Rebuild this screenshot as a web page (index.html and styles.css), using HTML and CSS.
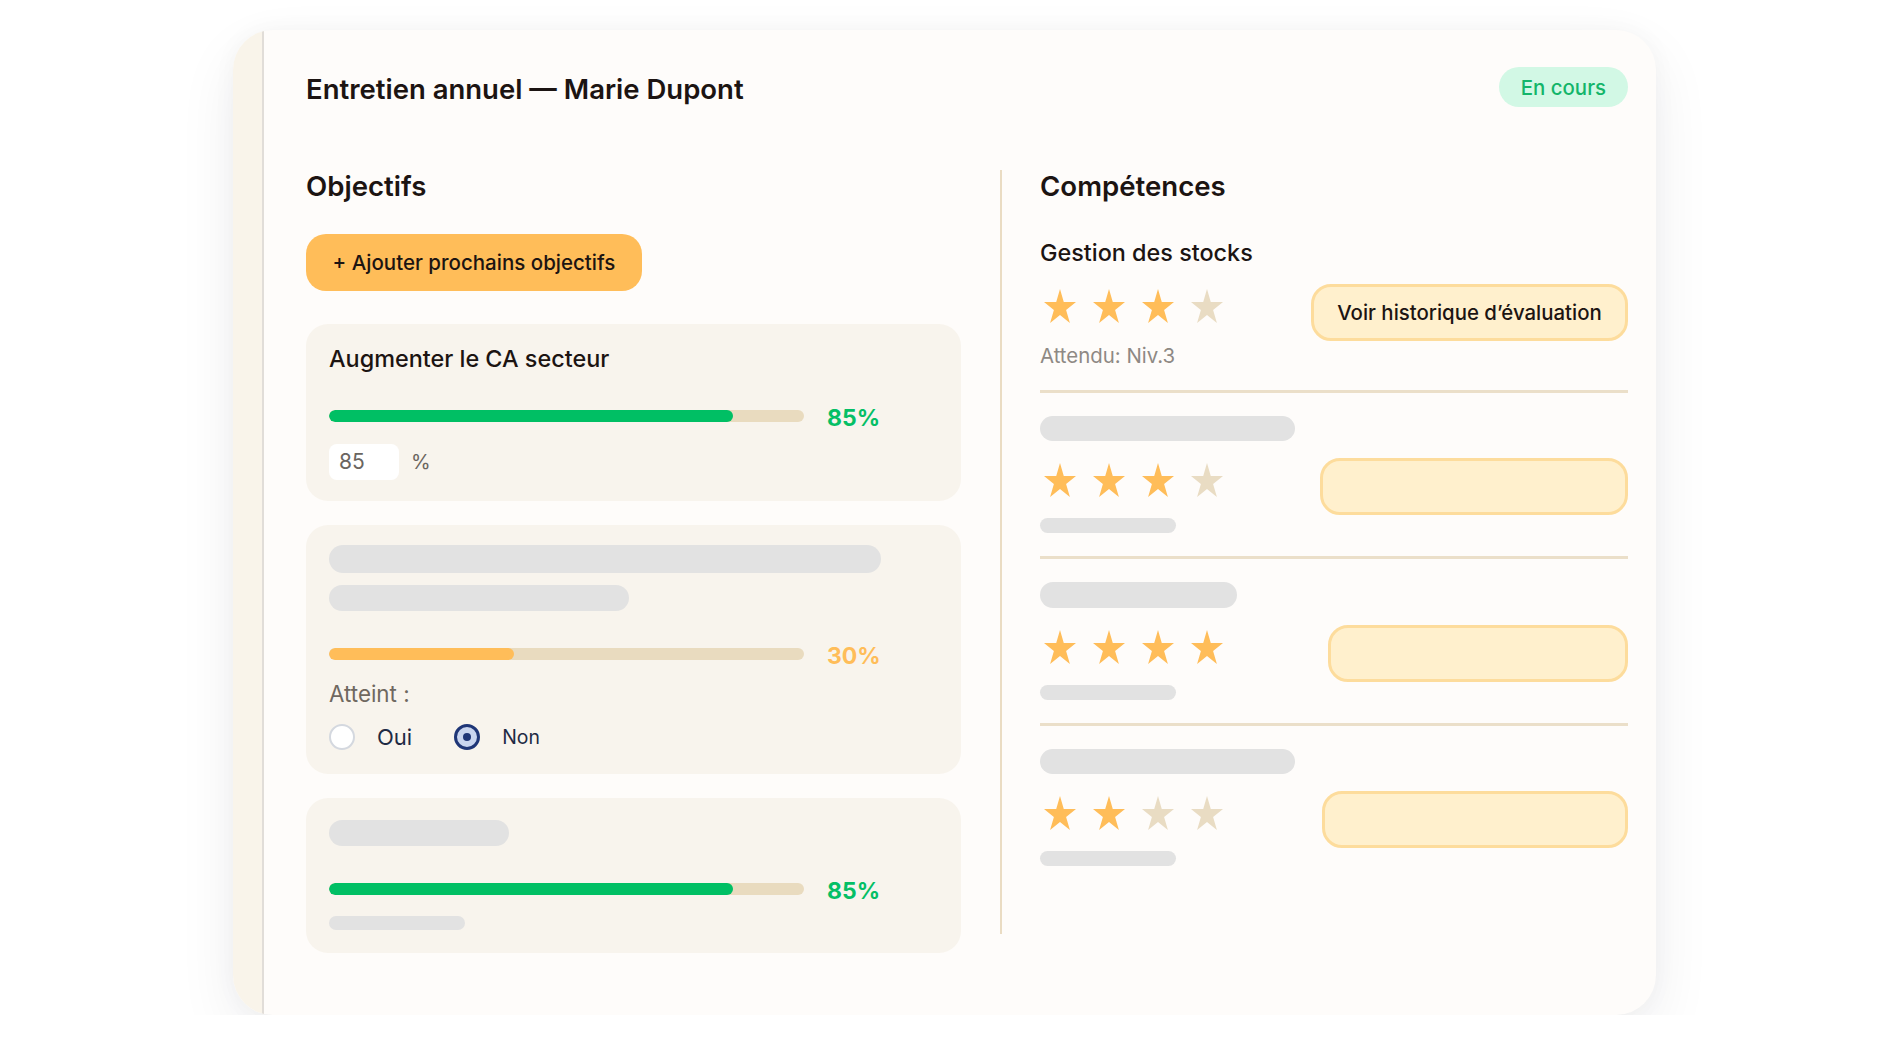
FILE: index.html
```html
<!DOCTYPE html>
<html lang="fr">
<head>
<meta charset="utf-8">
<title>Entretien annuel — Marie Dupont</title>
<link rel="stylesheet" href="styles.css">
</head>
<body>
<div class="card">
  <div class="strip"></div>
  <main class="main">
    <header class="header">
      <h1 class="title">Entretien annuel — Marie Dupont</h1>
      <span class="badge">En cours</span>
    </header>

    <div class="columns">
      <section class="col-left">
        <h2 class="section-title">Objectifs</h2>
        <button class="btn-add">+ Ajouter prochains objectifs</button>

        <div class="obj-list">
          <article class="obj-card obj-card--first">
            <h3 class="obj-title">Augmenter le CA secteur</h3>
            <div class="progress-row">
              <div class="track"><div class="fill fill-green" style="width:85%"></div></div>
              <span class="pct pct-green">85%</span>
            </div>
            <div class="input-row">
              <span class="num-input">85</span>
              <span class="unit">%</span>
            </div>
          </article>

          <article class="obj-card obj-card--second">
            <div class="skel skel-l1"></div>
            <div class="skel skel-l2"></div>
            <div class="progress-row">
              <div class="track"><div class="fill fill-orange" style="width:39%"></div></div>
              <span class="pct pct-orange">30%</span>
            </div>
            <div class="atteint">Atteint :</div>
            <div class="radio-row">
              <span class="radio"></span>
              <span class="radio-label">Oui</span>
              <span class="radio radio--on"><span class="radio-dot"></span></span>
              <span class="radio-label radio-label--small">Non</span>
            </div>
          </article>

          <article class="obj-card obj-card--third">
            <div class="skel skel-l3"></div>
            <div class="progress-row">
              <div class="track"><div class="fill fill-green" style="width:85%"></div></div>
              <span class="pct pct-green">85%</span>
            </div>
            <div class="skel skel-sm"></div>
          </article>
        </div>
      </section>

      <div class="vdivider"></div>

      <section class="col-right">
        <h2 class="section-title section-title--right">Compétences</h2>

        <div class="comp comp--first">
          <div class="comp-title">Gestion des stocks</div>
          <div class="comp-row">
            <div class="stars">
              <svg class="star on" viewBox="0 0 32 34"><polygon points="16,0 19.77,12.99 32,12.99 22.1,21.02 25.89,34 16,25.98 6.11,34 9.89,21.02 0,12.99 12.22,12.99"/></svg>
              <svg class="star on" viewBox="0 0 32 34"><polygon points="16,0 19.77,12.99 32,12.99 22.1,21.02 25.89,34 16,25.98 6.11,34 9.89,21.02 0,12.99 12.22,12.99"/></svg>
              <svg class="star on" viewBox="0 0 32 34"><polygon points="16,0 19.77,12.99 32,12.99 22.1,21.02 25.89,34 16,25.98 6.11,34 9.89,21.02 0,12.99 12.22,12.99"/></svg>
              <svg class="star off" viewBox="0 0 32 34"><polygon points="16,0 19.77,12.99 32,12.99 22.1,21.02 25.89,34 16,25.98 6.11,34 9.89,21.02 0,12.99 12.22,12.99"/></svg>
            </div>
            <button class="btn-outline btn-w1">Voir historique d’évaluation</button>
          </div>
          <div class="comp-sub">Attendu: Niv.3</div>
        </div>

        <div class="comp">
          <div class="skel skel-ct1"></div>
          <div class="comp-row">
            <div class="stars">
              <svg class="star on" viewBox="0 0 32 34"><polygon points="16,0 19.77,12.99 32,12.99 22.1,21.02 25.89,34 16,25.98 6.11,34 9.89,21.02 0,12.99 12.22,12.99"/></svg>
              <svg class="star on" viewBox="0 0 32 34"><polygon points="16,0 19.77,12.99 32,12.99 22.1,21.02 25.89,34 16,25.98 6.11,34 9.89,21.02 0,12.99 12.22,12.99"/></svg>
              <svg class="star on" viewBox="0 0 32 34"><polygon points="16,0 19.77,12.99 32,12.99 22.1,21.02 25.89,34 16,25.98 6.11,34 9.89,21.02 0,12.99 12.22,12.99"/></svg>
              <svg class="star off" viewBox="0 0 32 34"><polygon points="16,0 19.77,12.99 32,12.99 22.1,21.02 25.89,34 16,25.98 6.11,34 9.89,21.02 0,12.99 12.22,12.99"/></svg>
            </div>
            <div class="btn-outline btn-w2"></div>
          </div>
          <div class="skel skel-csub"></div>
        </div>

        <div class="comp">
          <div class="skel skel-ct2"></div>
          <div class="comp-row">
            <div class="stars">
              <svg class="star on" viewBox="0 0 32 34"><polygon points="16,0 19.77,12.99 32,12.99 22.1,21.02 25.89,34 16,25.98 6.11,34 9.89,21.02 0,12.99 12.22,12.99"/></svg>
              <svg class="star on" viewBox="0 0 32 34"><polygon points="16,0 19.77,12.99 32,12.99 22.1,21.02 25.89,34 16,25.98 6.11,34 9.89,21.02 0,12.99 12.22,12.99"/></svg>
              <svg class="star on" viewBox="0 0 32 34"><polygon points="16,0 19.77,12.99 32,12.99 22.1,21.02 25.89,34 16,25.98 6.11,34 9.89,21.02 0,12.99 12.22,12.99"/></svg>
              <svg class="star on" viewBox="0 0 32 34"><polygon points="16,0 19.77,12.99 32,12.99 22.1,21.02 25.89,34 16,25.98 6.11,34 9.89,21.02 0,12.99 12.22,12.99"/></svg>
            </div>
            <div class="btn-outline btn-w3"></div>
          </div>
          <div class="skel skel-csub"></div>
        </div>

        <div class="comp comp--last">
          <div class="skel skel-ct1"></div>
          <div class="comp-row">
            <div class="stars">
              <svg class="star on" viewBox="0 0 32 34"><polygon points="16,0 19.77,12.99 32,12.99 22.1,21.02 25.89,34 16,25.98 6.11,34 9.89,21.02 0,12.99 12.22,12.99"/></svg>
              <svg class="star on" viewBox="0 0 32 34"><polygon points="16,0 19.77,12.99 32,12.99 22.1,21.02 25.89,34 16,25.98 6.11,34 9.89,21.02 0,12.99 12.22,12.99"/></svg>
              <svg class="star off" viewBox="0 0 32 34"><polygon points="16,0 19.77,12.99 32,12.99 22.1,21.02 25.89,34 16,25.98 6.11,34 9.89,21.02 0,12.99 12.22,12.99"/></svg>
              <svg class="star off" viewBox="0 0 32 34"><polygon points="16,0 19.77,12.99 32,12.99 22.1,21.02 25.89,34 16,25.98 6.11,34 9.89,21.02 0,12.99 12.22,12.99"/></svg>
            </div>
            <div class="btn-outline btn-w4"></div>
          </div>
          <div class="skel skel-csub"></div>
        </div>
      </section>
    </div>
  </main>
</div>
</body>
</html>
```
FILE: styles.css
```css
* { box-sizing: border-box; }

html, body {
  margin: 0;
  padding: 0;
  background: #ffffff;
}

body {
  font-family: Inter, "Noto Sans", "Liberation Sans", sans-serif;
  color: #1c1412;
  padding: 30px 0 0 233px;
}

.card {
  width: 1423px;
  height: 985px;
  display: flex;
  border-radius: 40px;
  overflow: hidden;
  background: #fefcfa;
  box-shadow: 0 22px 60px rgba(30, 30, 40, 0.07), 0 0 24px rgba(30, 30, 40, 0.035);
}

.strip {
  width: 31px;
  flex: none;
  background: #f9f4ea;
  border-right: 2px solid #e1ddd8;
}

.main {
  flex: 1;
  padding: 39px 28px 0 42px;
}

.header {
  display: flex;
  align-items: center;
  justify-content: space-between;
  height: 40px;
}

.title {
  margin: 0;
  font-size: 27.5px;
  font-weight: 600;
  line-height: 34px;
}

.badge {
  height: 40px;
  padding: 0 22px;
  margin-top: -4px;
  display: flex;
  align-items: center;
  border-radius: 20px;
  background: #d2f8e5;
  color: #13b56a;
  font-size: 20.4px;
  font-weight: 500;
}

.columns {
  display: flex;
  margin-top: 61px;
}

.col-left {
  width: 655px;
  flex: none;
}

.vdivider {
  width: 2px;
  height: 764px;
  flex: none;
  margin: 0 38px 0 39px;
  background: #eadcc3;
}

.col-right {
  flex: 1;
}

.section-title {
  margin: 0;
  font-size: 27.6px;
  font-weight: 600;
  line-height: 32px;
}

.section-title--right {
  margin-bottom: 37px;
}

.btn-add {
  display: block;
  margin-top: 32px;
  height: 57px;
  width: 336px;
  padding: 0;
  border: none;
  border-radius: 20px;
  background: #ffbd59;
  color: #1c1412;
  font-family: inherit;
  font-size: 20.5px;
  font-weight: 500;
  text-align: center;
}

.obj-list {
  margin-top: 33px;
  display: flex;
  flex-direction: column;
  gap: 24px;
}

.obj-card {
  background: #f8f4ed;
  border-radius: 22px;
  padding: 21px 23px;
}

.obj-card--second { padding: 20px 23px 24px; }
.obj-card--third { padding: 22px 23px 23px; }

.obj-title {
  margin: 0;
  font-size: 23.4px;
  font-weight: 500;
  line-height: 28px;
}

.progress-row {
  display: flex;
  align-items: center;
  gap: 23px;
  height: 30px;
  margin-top: 28px;
}

.track {
  width: 475px;
  height: 12px;
  border-radius: 6px;
  background: #e9dbbf;
  overflow: hidden;
}

.fill {
  height: 100%;
  border-radius: 6px;
}

.fill-green { background: #00bf64; }
.fill-orange { background: #ffbd59; }

.pct {
  font-size: 23px;
  font-weight: 700;
  line-height: 30px;
  padding-top: 3px;
}

.pct-green { color: #05bf66; }
.pct-orange { color: #ffbd59; }

.input-row {
  display: flex;
  align-items: center;
  margin-top: 13px;
  gap: 12px;
}

.num-input {
  width: 70px;
  height: 36px;
  border-radius: 8px;
  background: #ffffff;
  color: #6a6560;
  font-size: 21px;
  line-height: 36px;
  padding-left: 10px;
}

.unit {
  font-size: 20px;
  color: #6a6560;
}

.skel {
  background: #e2e2e2;
  border-radius: 999px;
}

.skel-l1 { width: 552px; height: 28px; }
.skel-l2 { width: 300px; height: 26px; margin-top: 12px; }
.skel-l3 { width: 180px; height: 26px; }
.skel-sm { width: 136px; height: 14px; margin-top: 12px; }

.atteint {
  margin-top: 12px;
  font-size: 22.4px;
  line-height: 26px;
  color: #6f6860;
}

.radio-row {
  display: flex;
  align-items: center;
  height: 26px;
  margin-top: 17px;
}

.radio {
  width: 26px;
  height: 26px;
  border-radius: 50%;
  background: #ffffff;
  border: 2px solid #d4d8df;
  display: flex;
  align-items: center;
  justify-content: center;
  flex: none;
}

.radio--on {
  background: #c9d5ef;
  border: 3px solid #1f3677;
  margin-left: 42px;
}

.radio-dot {
  width: 8px;
  height: 8px;
  border-radius: 50%;
  background: #1f3677;
}

.radio-label {
  margin-left: 22px;
  font-size: 22px;
  color: #1e2a44;
}

.radio-label--small {
  font-size: 19.4px;
}

.comp {
  padding: 23px 0 23px;
  border-bottom: 3px solid #ebdfc9;
}

.comp--first { padding: 0 0 22px; }
.comp--last { border-bottom: none; }

.comp-title {
  font-size: 23.4px;
  font-weight: 500;
  line-height: 28px;
}

.skel-ct1 { width: 255px; height: 25px; }
.skel-ct2 { width: 197px; height: 26px; }
.skel-csub { width: 136px; height: 15px; margin-top: 3px; }

.comp-row {
  display: flex;
  align-items: flex-start;
  justify-content: space-between;
  margin-top: 17px;
  height: 57px;
}

.stars {
  display: flex;
  gap: 17px;
  margin-left: 4px;
  margin-top: 5px;
}

.star {
  width: 32px;
  height: 34px;
  display: block;
}

.star.on { fill: #ffbd59; }
.star.off { fill: #e9dcc3; }

.btn-outline {
  height: 57px;
  border-radius: 20px;
  background: #fff0cd;
  border: 3px solid #fddc9c;
  font-family: inherit;
  font-size: 20.4px;
  font-weight: 500;
  color: #1c1412;
  padding: 0;
  text-align: center;
}

.btn-w1 { width: 317px; }
.btn-w2 { width: 308px; }
.btn-w3 { width: 300px; }
.btn-w4 { width: 306px; }

.comp-sub {
  margin-top: 3px;
  font-size: 20.4px;
  line-height: 24px;
  color: #8e8984;
}
```
